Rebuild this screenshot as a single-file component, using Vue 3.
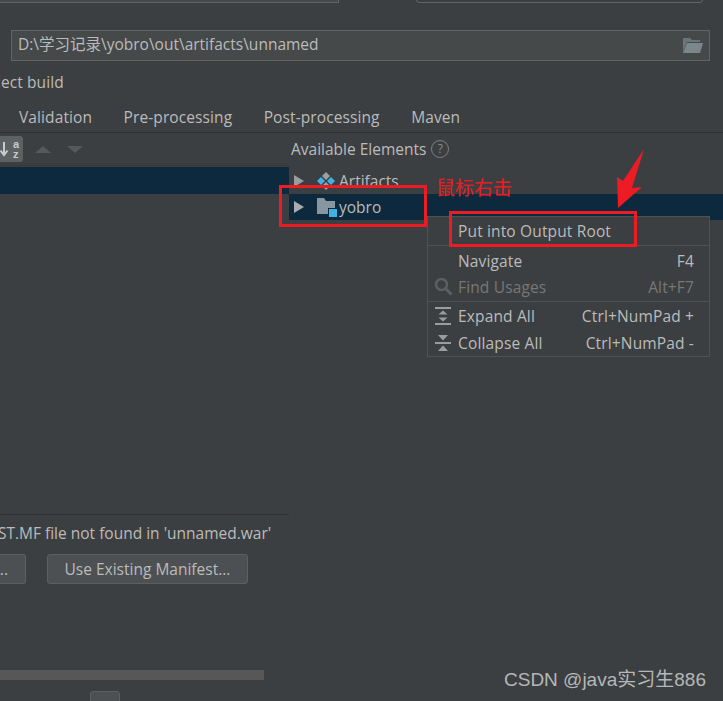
<script setup>
const menuGroups = [
  [{ label: 'Put into Output Root', h: 28 }],
  [
    { label: 'Navigate', key: 'F4', h: 29 },
    { label: 'Find Usages', key: 'Alt+F7', h: 26, off: true, icon: 'search' }
  ],
  [
    { label: 'Expand All', key: 'Ctrl+NumPad +', h: 28, icon: 'expand' },
    { label: 'Collapse All', key: 'Ctrl+NumPad -', h: 26, icon: 'collapse' }
  ]
]
const tabs = ['Validation', 'Pre-processing', 'Post-processing', 'Maven']
</script>

<template>
  <div class="page">
    <div class="top-stubs">
      <div class="stub stub-a"></div>
      <div class="stub stub-b"></div>
    </div>

    <div class="path-field">
      <span class="path-text">D:\学习记录\yobro\out\artifacts\unnamed</span>
      <svg class="folder-open" width="20" height="16" viewBox="0 0 20 16">
        <path d="M0 0h7l2 2h8v2H4L0 14z" fill="#6b7579" />
        <path d="M4 5h16l-3 10H0z" fill="#7b878b" />
      </svg>
    </div>

    <div class="build-row"><span class="build-text">Include in project build</span></div>

    <div class="tabs">
      <span v-for="t in tabs" :key="t" class="tab">{{ t }}</span>
    </div>

    <div class="panels">
      <div class="left">
        <div class="toolbar">
          <div class="sort-btn">
            <svg width="13" height="18" viewBox="0 0 13 18">
              <path d="M4 2v12M0.5 10.5L4 15l3.500-4.500" fill="none" stroke="#c8cbcd" stroke-width="2" />
            </svg>
            <span class="az"><i>a</i><i>z</i></span>
          </div>
          <svg width="16" height="7" viewBox="0 0 16 7"><path d="M8 0l8 7H0z" fill="#55595b" /></svg>
          <svg width="16" height="7" viewBox="0 0 16 7"><path d="M0 0h16L8 7z" fill="#55595b" /></svg>
        </div>
        <div class="left-selected"></div>
        <div class="left-spacer"></div>
        <div class="manifest-msg"><span class="manifest-text">META-INF/MANIFEST.MF file not found in 'unnamed.war'</span></div>
        <div class="btn-row">
          <div class="btn btn-cut"><span>Create Manifest...</span></div>
          <div class="btn btn-full">Use Existing Manifest...</div>
        </div>
        <div class="scrollbar"></div>
        <div class="bottom-btn"></div>
      </div>

      <div class="right">
        <div class="avail">
          <span>Available Elements</span>
          <span class="help">?</span>
        </div>
        <div class="tree-row">
          <svg class="tri" width="10" height="12" viewBox="0 0 10 12"><path d="M0 0l10 6-10 6z" fill="#9a9d9f" /></svg>
          <svg class="tree-icon" width="18" height="18" viewBox="0 0 18 18">
            <path d="M9 0l4 4-4 4-4-4z" fill="#9aa0a4" />
            <path d="M4 5l4 4-4 4-4-4z" fill="#3fb1e3" />
            <path d="M14 5l4 4-4 4-4-4z" fill="#3fb1e3" />
            <path d="M9 10l4 4-4 4-4-4z" fill="#9aa0a4" />
          </svg>
          <span>Artifacts</span>
        </div>
        <div class="tree-row selected">
          <svg class="tri" width="10" height="12" viewBox="0 0 10 12"><path d="M0 0l10 6-10 6z" fill="#a9acae" /></svg>
          <svg class="tree-icon folder" width="20" height="19" viewBox="0 0 20 19">
            <path d="M0 0h7l2 3h9v13H0z" fill="#87969f" />
            <rect x="11" y="10" width="9" height="9" fill="#0d293e" />
            <rect x="12" y="11" width="8" height="8" fill="#3fb1e3" />
          </svg>
          <span>yobro</span>
        </div>
      </div>
    </div>

    <div class="menu">
      <div v-for="(group, g) in menuGroups" :key="g" class="menu-group">
        <div
          v-for="item in group"
          :key="item.label"
          class="menu-item"
          :class="{ off: item.off }"
          :style="{ height: item.h + 'px' }"
        >
          <span class="menu-icon">
            <svg v-if="item.icon === 'search'" width="19" height="19" viewBox="0 0 19 19">
              <circle cx="7.500" cy="7.500" r="5.500" fill="none" stroke="#5c5f61" stroke-width="2.500" />
              <path d="M11.500 11.500L17.500 17.500" stroke="#5c5f61" stroke-width="3" />
            </svg>
            <svg v-else-if="item.icon === 'expand'" width="16" height="18" viewBox="0 0 16 18">
              <path d="M0 1h16M0 17h16" stroke="#9a9d9f" stroke-width="2" />
              <path d="M8 3.500l4.500 4h-9zM8 14.500l4.500-4h-9z" fill="#9a9d9f" />
            </svg>
            <svg v-else-if="item.icon === 'collapse'" width="16" height="18" viewBox="0 0 16 18">
              <path d="M0 9h16" stroke="#9a9d9f" stroke-width="2" />
              <path d="M3 1h10L8 6.500zM3 17h10l-5-5.500z" fill="#9a9d9f" />
            </svg>
          </span>
          <span class="menu-label">{{ item.label }}</span>
          <span v-if="item.key" class="menu-key">{{ item.key }}</span>
        </div>
      </div>
    </div>

    <div class="mark mark-folder"></div>
    <div class="mark mark-item"></div>
    <span class="mark-text">鼠标右击</span>
    <svg class="mark-arrow" width="30" height="62" viewBox="0 0 30 62">
      <path d="M28 0L7 32 1 28 2 59 26 38 16 39z" fill="#ed1c24" />
    </svg>

    <span class="watermark">CSDN @java实习生886</span>
  </div>
</template>

<style>
html, body { margin: 0; background: #3c3f41; }
</style>

<style scoped>
.page {
  position: relative;
  width: 723px;
  height: 701px;
  overflow: hidden;
  background: #3c3f41;
  color: #bbbbbb;
  font-family: "Open Sans", "Noto Sans CJK SC", sans-serif;
  font-size: 15.500px;
}
.top-stubs { display: flex; height: 3px; overflow: hidden; }
.stub { height: 30px; margin-top: -27px; background: #45494a; border: 1px solid #646464; box-sizing: border-box; }
.stub-a { width: 340px; margin-left: -1px; }
.stub-b { width: 287px; margin-left: 77px; border-radius: 3px; background: #3c3f41; }

.path-field {
  display: flex;
  align-items: center;
  justify-content: space-between;
  box-sizing: border-box;
  width: 699px;
  height: 31px;
  margin: 27px 0 0 11px;
  padding: 0 6px 5px 6px;
  background: #45494a;
  border: 1px solid #646464;
}
.folder-open { flex: none; margin-top: 5px; }

.build-row { height: 20px; margin-top: 11px; overflow: hidden; line-height: 20px; white-space: nowrap; }
.build-text { display: block; margin-left: -104px; letter-spacing: 0.1px; }

.tabs { display: flex; gap: 31.500px; height: 25px; margin-top: 15px; padding-left: 19px; line-height: 20px; letter-spacing: 0.1px; }

.panels { display: flex; height: 567px; border-top: 1px solid #323232; }
.left { flex: none; width: 289px; }
.toolbar { display: flex; align-items: center; gap: 16px; box-sizing: border-box; height: 33px; padding: 3px 0 3px 0; border-bottom: 1px solid #353739; }
.sort-btn {
  display: flex;
  align-items: center;
  box-sizing: border-box;
  width: 23px;
  height: 26px;
  margin-right: -4px;
  background: #5c6164;
  border-radius: 0 3px 3px 0;
}
.az { display: flex; flex-direction: column; font-size: 11px; line-height: 10px; font-weight: 700; color: #c8cbcd; font-family: "Liberation Sans", sans-serif; }
.az i { font-style: normal; }
.left-selected { height: 27px; background: #0d293e; margin-top: 1px; }
.left-spacer { height: 320px; border-bottom: 1px solid #323232; }
.manifest-msg { height: 20px; margin-top: 8px; line-height: 20px; overflow: hidden; white-space: nowrap; }
.manifest-text { display: block; margin-left: -134px; }
.btn-row { display: flex; gap: 21px; margin-top: 11px; }
.btn {
  display: flex;
  align-items: center;
  justify-content: center;
  box-sizing: border-box;
  height: 30px;
  background: #4c5052;
  border: 1px solid #5e6060;
  border-radius: 3px;
  white-space: nowrap;
}
.btn-cut { width: 26px; justify-content: flex-end; overflow: hidden; padding-right: 17px; border-left: none; border-radius: 0 3px 3px 0; }
.btn-cut span { flex: none; }
.btn-full { width: 201px; }
.scrollbar { width: 264px; height: 10px; margin-top: 86px; background: #575757; }
.bottom-btn { box-sizing: border-box; width: 30px; height: 30px; margin: 11px 0 0 90px; background: #4c5052; border: 1px solid #5e6060; border-radius: 3px; }

.right { flex: 1; min-width: 0; }
.avail { display: flex; align-items: center; gap: 5px; height: 33px; padding-left: 2px; margin-top: -1px; }
.help {
  display: flex;
  align-items: center;
  justify-content: center;
  box-sizing: border-box;
  width: 18px;
  height: 18px;
  border: 1.500px solid #7d8184;
  border-radius: 50%;
  font-size: 12px;
  color: #8a8d90;
}
.tree-row { display: flex; align-items: center; height: 31px; padding-left: 5px; }
.tree-row.selected { height: 26px; margin-top: -2px; background: #0d293e; }
.tree-row span { line-height: 20px; }
.tri { flex: none; margin-right: 13px; }
.tree-icon { flex: none; margin-right: 4px; }
.tree-icon.folder { margin-right: 2px; }

.menu {
  position: absolute;
  left: 427px;
  top: 216px;
  box-sizing: border-box;
  width: 283px;
  background: #3c3f41;
  border: 1px solid #515151;
}
.menu-group + .menu-group { border-top: 1px solid #515151; }
.menu-item { display: flex; align-items: center; box-sizing: border-box; padding-right: 15px; letter-spacing: 0.15px; }
.menu-icon { display: flex; flex: none; align-items: center; justify-content: center; width: 30px; height: 100%; box-sizing: border-box; }
.menu-label { flex: 1; }
.menu-key { flex: none; }
.menu-item.off { color: #777777; padding-bottom: 3px; }

.mark { position: absolute; box-sizing: border-box; border: 3px solid #ed1c24; }
.mark-folder { left: 279px; top: 185px; width: 148px; height: 42px; }
.mark-item { left: 449px; top: 211px; width: 188px; height: 36px; }
.mark-text { position: absolute; left: 436px; top: 175px; font-size: 19px; line-height: 24px; color: #ed1c24; font-family: "Noto Sans CJK SC", sans-serif; }
.mark-arrow { position: absolute; left: 616px; top: 149px; }
.watermark { position: absolute; left: 504px; top: 669px; font-family: "Liberation Sans", "Noto Sans CJK SC", sans-serif; font-size: 19px; line-height: 22px; color: #b5b7b8; white-space: nowrap; }
</style>
